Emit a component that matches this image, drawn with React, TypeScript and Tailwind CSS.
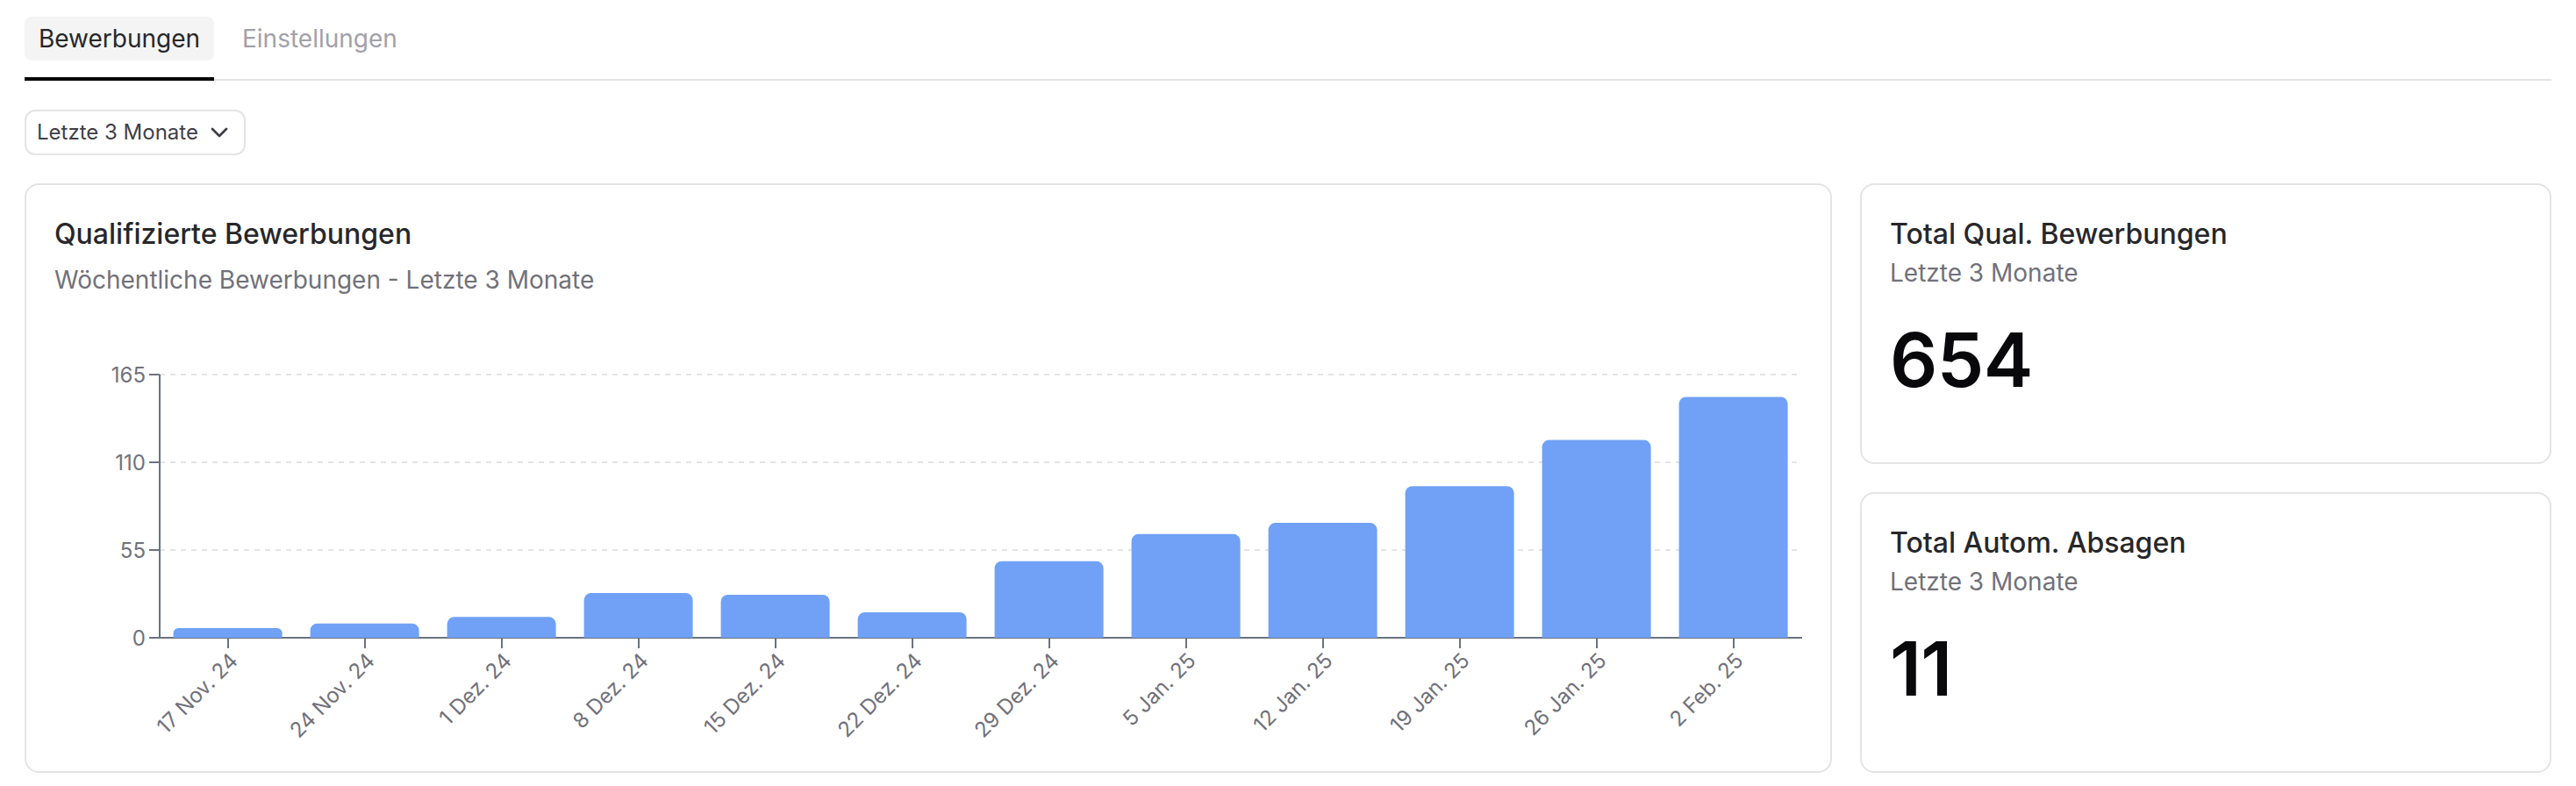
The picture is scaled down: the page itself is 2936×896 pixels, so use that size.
import { ChevronDown } from "lucide-react";

const weeks = [
  { label: "17 Nov. 24", value: 6 },
  { label: "24 Nov. 24", value: 9 },
  { label: "1 Dez. 24", value: 13 },
  { label: "8 Dez. 24", value: 28 },
  { label: "15 Dez. 24", value: 27 },
  { label: "22 Dez. 24", value: 16 },
  { label: "29 Dez. 24", value: 48 },
  { label: "5 Jan. 25", value: 65 },
  { label: "12 Jan. 25", value: 72 },
  { label: "19 Jan. 25", value: 95 },
  { label: "26 Jan. 25", value: 124 },
  { label: "2 Feb. 25", value: 151 },
];

const ticks = [0, 55, 110, 165];
const MAX = 165;
const LEFT = 120;
const RIGHT = 1992;
const TOP = 40;
const BASE = 340;
const STEP = (RIGHT - LEFT) / weeks.length;
const BAR = 124;

const yOf = (v: number) => BASE - (v / MAX) * (BASE - TOP);

// Bar outline with rounded top corners, clamped for very short bars
function barPath(index: number, value: number) {
  const x = LEFT + index * STEP + 15.6;
  const y = yOf(value);
  const r = Math.min(8, (BASE - y) / 2);
  return `M${x},${BASE} V${y + r} A${r},${r} 0 0 1 ${x + r},${y} H${x + BAR - r} A${r},${r} 0 0 1 ${x + BAR},${y + r} V${BASE} Z`;
}

function Chart() {
  return (
    <svg viewBox="0 0 2000 480" className="block h-[480px] w-[2000px] overflow-visible">
      {ticks.slice(1).map((t) => (
        <line key={t} x1={LEFT} x2={RIGHT} y1={yOf(t)} y2={yOf(t)} stroke="#e4e4e7" strokeWidth="2" strokeDasharray="6 6" />
      ))}
      <line x1={LEFT} x2={RIGHT} y1={BASE} y2={BASE} stroke="#6b7280" strokeWidth="2" />
      {weeks.map((w, i) => {
        const x = LEFT + (i + 0.5) * STEP;
        return (
          <g key={w.label}>
            <line x1={x} x2={x} y1={BASE} y2={BASE + 12} stroke="#6b7280" strokeWidth="2" />
            <text
              transform={`translate(${x} ${BASE + 16}) rotate(-45)`}
              x="0.5"
              y="17"
              textAnchor="end"
              className="fill-[#71717a] text-[24px]"
            >
              {w.label}
            </text>
          </g>
        );
      })}
      <line x1={LEFT} x2={LEFT} y1={TOP} y2={BASE} stroke="#6b7280" strokeWidth="2" />
      {ticks.map((t) => (
        <g key={t}>
          <line x1={LEFT - 12} x2={LEFT} y1={yOf(t)} y2={yOf(t)} stroke="#6b7280" strokeWidth="2" />
          <text x={LEFT - 16} y={yOf(t) + 8.5} textAnchor="end" className="fill-[#71717a] text-[24px]">
            {t}
          </text>
        </g>
      ))}
      {weeks.map((w, i) => (
        <path key={w.label} d={barPath(i, w.value)} fill="#70a1f6" />
      ))}
    </svg>
  );
}

function StatCard({ title, value }: { title: string; value: string }) {
  return (
    <section className="flex-1 rounded-[16px] border-2 border-[#e4e4e7] px-8 pt-8">
      <h2 className="text-[32px] leading-[48px] font-medium text-[#27272a]">{title}</h2>
      <p className="text-[28px] leading-[40px] text-[#71717a]">Letzte 3 Monate</p>
      <p className="mt-8 text-[85px] leading-[95px] font-semibold tracking-[-0.6px] text-[#09090b]">{value}</p>
    </section>
  );
}

export default function App() {
  return (
    <main className="h-[896px] bg-white px-7 font-['Inter',sans-serif]">
      <nav className="flex h-[92px] items-start border-b-2 border-[#e4e4e4]">
        <div className="h-[92px] w-[216px] border-b-4 border-black pt-[19px]">
          <button className="block h-[50px] w-full rounded-[8px] bg-[#f4f4f4] text-center text-[28px] leading-[50px] text-[#27272a]">
            Bewerbungen
          </button>
        </div>
        <button className="mt-[19px] ml-4 block h-[50px] px-4 text-[28px] leading-[50px] text-[#a1a1aa]">Einstellungen</button>
      </nav>
      <button className="mt-[33px] flex h-[52px] w-[252px] items-center justify-between rounded-[12px] border-2 border-[#e4e4e4] px-3 text-[24px] text-[#3f3f46]">
        Letzte 3 Monate
        <ChevronDown className="size-8" strokeWidth={2} />
      </button>
      <div className="mt-8 flex h-[672px] gap-8">
        <section className="w-[2060px] shrink-0 rounded-[16px] border-2 border-[#e4e4e7] px-8 pt-8">
          <h2 className="text-[32px] leading-[48px] font-medium text-[#27272a]">Qualifizierte Bewerbungen</h2>
          <p className="mt-2 text-[28px] leading-[40px] text-[#71717a]">Wöchentliche Bewerbungen - Letzte 3 Monate</p>
          <div className="mt-[48px]">
            <Chart />
          </div>
        </section>
        <div className="flex min-w-0 flex-1 flex-col gap-8">
          <StatCard title="Total Qual. Bewerbungen" value="654" />
          <StatCard title="Total Autom. Absagen" value="11" />
        </div>
      </div>
    </main>
  );
}
